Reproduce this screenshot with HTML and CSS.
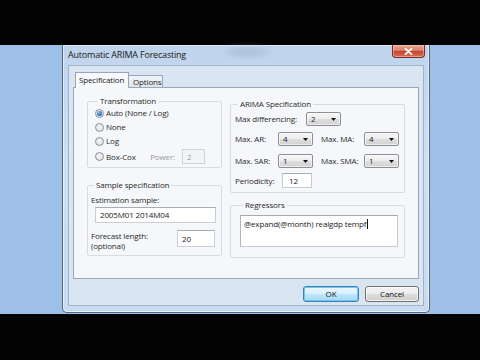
FILE: index.html
```html
<!DOCTYPE html>
<html>
<head>
<meta charset="utf-8">
<title>Automatic ARIMA Forecasting</title>
<link rel="stylesheet" href="styles.css">
</head>
<body>
<div class="screen">
  <div class="bar bar-top"></div>
  <div class="desktop">
    <div class="dialog">
      <div class="titlebar">
        <span class="title">Automatic ARIMA Forecasting</span>
        <span class="glass-blob"></span>
        <span class="close"><svg width="9" height="7" viewBox="0 0 9 7"><path d="M1.5 0.8 L7.5 6.2 M7.5 0.8 L1.5 6.2" stroke="#fff" stroke-width="1.8" stroke-linecap="round"/></svg></span>
      </div>
      <div class="client">
        <div class="tabs">
          <div class="tab active">Specification</div>
          <div class="tab">Options</div>
        </div>
        <div class="panel">
          <div class="col col-left">
            <div class="group g-trans">
              <div class="gtitle">Transformation</div>
              <div class="radios">
                <div class="radio-row"><span class="radio checked"></span><span>Auto (None / Log)</span></div>
                <div class="radio-row"><span class="radio"></span><span>None</span></div>
                <div class="radio-row"><span class="radio"></span><span>Log</span></div>
                <div class="radio-row boxcox"><span class="radio"></span><span>Box-Cox</span><span class="power">Power:</span><span class="field disabled power-box">2</span></div>
              </div>
            </div>
            <div class="group g-sample">
              <div class="gtitle">Sample specification</div>
              <div class="est-lbl">Estimation sample:</div>
              <div class="field est-field">2005M01 2014M04</div>
              <div class="fc-row">
                <div class="fc-lbl"><div>Forecast length:</div><div>(optional)</div></div>
                <div class="field fc-field">20</div>
              </div>
            </div>
          </div>
          <div class="col col-right">
            <div class="group g-arima">
              <div class="gtitle">ARIMA Specification</div>
              <div class="arow r-diff"><span class="lbl w-diff">Max differencing:</span><span class="combo"><span>2</span><svg class="arrow" width="5" height="3" viewBox="0 0 5 3"><path d="M0 0 H5 L2.5 3 Z" fill="#111"/></svg></span></div>
              <div class="arow r-ar"><span class="lbl w-a">Max. AR:</span><span class="combo"><span>4</span><svg class="arrow" width="5" height="3" viewBox="0 0 5 3"><path d="M0 0 H5 L2.5 3 Z" fill="#111"/></svg></span><span class="lbl w-b">Max. MA:</span><span class="combo"><span>4</span><svg class="arrow" width="5" height="3" viewBox="0 0 5 3"><path d="M0 0 H5 L2.5 3 Z" fill="#111"/></svg></span></div>
              <div class="arow r-sar"><span class="lbl w-a">Max. SAR:</span><span class="combo"><span>1</span><svg class="arrow" width="5" height="3" viewBox="0 0 5 3"><path d="M0 0 H5 L2.5 3 Z" fill="#111"/></svg></span><span class="lbl w-b">Max. SMA:</span><span class="combo"><span>1</span><svg class="arrow" width="5" height="3" viewBox="0 0 5 3"><path d="M0 0 H5 L2.5 3 Z" fill="#111"/></svg></span></div>
              <div class="arow r-per"><span class="lbl w-per">Periodicity:</span><span class="field per-field">12</span></div>
            </div>
            <div class="group g-reg">
              <div class="gtitle">Regressors</div>
              <div class="field reg-field">@expand(@month) realgdp tempf<span class="caret"></span></div>
            </div>
          </div>
        </div>
        <div class="buttons">
          <span class="btn btn-default">OK</span>
          <span class="btn">Cancel</span>
        </div>
      </div>
    </div>
  </div>
  <div class="bar bar-bottom"></div>
</div>
</body>
</html>
```

FILE: styles.css
```css
* { box-sizing: border-box; }
html, body { margin: 0; padding: 0; }
body {
  width: 480px; height: 360px; overflow: hidden;
  background: #030303;
  font-family: "Open Sans", "Noto Sans", sans-serif;
  font-size: 8px; line-height: 12px; color: #2a2a2a;
  letter-spacing: -0.15px;
}
.screen { width: 480px; height: 360px; display: flex; flex-direction: column; }
.bar { background: #030303; }
.bar-top { height: 45px; }
.bar-bottom { flex: 1; }
.desktop { height: 269px; background: #9dbfe8; padding-left: 62px; display: flex; }

.dialog {
  width: 368px; height: 268px;
  border: 1px solid #56687d; border-top: none;
  border-radius: 0 0 5px 5px;
  background: linear-gradient(180deg, #bfd4ec 0%, #cfe0f3 45%, #c9dbef 100%);
  box-shadow: inset 0 0 0 1px rgba(255,255,255,0.55);
  padding: 0 5px 6px 5px;
  display: flex; flex-direction: column;
}
.titlebar { height: 20px; display: flex; align-items: flex-start; position: relative; }
.title { font-size: 9px; line-height: 20px; color: #1a1a1a; letter-spacing: -0.2px; }
.glass-blob {
  position: absolute; left: 158px; top: 3px; width: 42px; height: 8px;
  background: #9fb6cf; border-radius: 50%; filter: blur(3px); opacity: .7;
}
.close {
  margin-left: auto; margin-right: -1px;
  width: 33px; height: 13px;
  border: 1px solid #7d2d22; border-top: none;
  border-radius: 0 0 4px 4px;
  background: linear-gradient(180deg, #e8a796 0%, #d9826d 45%, #c3452f 55%, #d5735b 100%);
  box-shadow: inset 0 0 0 1px rgba(255,220,210,0.45);
  display: flex; align-items: center; justify-content: center;
}

.client {
  flex: 1;
  background: #dae5f2;
  border: 1px solid #9fb3ca;
  padding: 6px 4px 3px 4px;
  display: flex; flex-direction: column;
}
.tabs { height: 15px; display: flex; align-items: flex-end; padding-left: 2px; }
.tab {
  height: 12px; line-height: 11px;
  padding: 0 4px;
  border: 1px solid #98a8bb; border-bottom: none;
  background: linear-gradient(180deg, #f2f4f7, #dfe5ec);
  color: #222;
  margin-left: -1px;
}
.tab.active {
  height: 16px; line-height: 14px;
  width: 54px; padding-left: 3px;
  background: #f6f8fa;
  margin-bottom: -1px; margin-left: 0;
  position: relative; z-index: 1;
}
.tab:last-child { width: 35px; }
.panel {
  height: 192px;
  border: 1px solid #98a8bb;
  background: #f5f7fa;
  display: flex; align-items: flex-start;
  padding: 0 13px; gap: 8px;
}
.col { display: flex; flex-direction: column; }
.col-left { width: 135px; padding-top: 13px; gap: 17px; }
.col-right { width: 175px; padding-top: 16px; gap: 12px; }
.group { border: 1px solid #d6dce4; border-radius: 2px; }
.gtitle {
  margin-top: -7px; margin-left: 3px;
  width: fit-content; padding: 0 2px;
  background: #f5f7fa; line-height: 12px; color: #2a2a2a;
}
.g-trans { height: 67px; padding-left: 7px; }
.g-sample { height: 71px; padding: 0 6px 0 3px; }
.g-arima { height: 89px; padding-left: 4px; }
.g-reg { height: 53px; padding-left: 9px; }

.radios { display: flex; flex-direction: column; gap: 2px; }
.radio-row { height: 12px; display: flex; align-items: center; gap: 2px; }
.radio-row.boxcox { height: 15px; }
.radio {
  width: 9px; height: 9px; border-radius: 50%;
  border: 1px solid #8b9097;
  background: radial-gradient(circle at 50% 40%, #f4f5f6 0%, #d9dde2 100%);
  display: inline-flex; align-items: center; justify-content: center;
  flex: none;
}
.radio.checked::after {
  content: ""; width: 5px; height: 5px; border-radius: 50%;
  background: radial-gradient(circle at 40% 35%, #8fc3ef 0%, #2b6fb6 60%, #1c4f8c 100%);
}
.power { margin-left: auto; color: #9a9a9a; margin-right: 5px; }
.power-box { width: 23px; height: 15px; margin-right: 16px; }

.field {
  background: #fff;
  border: 1px solid #c9ced5; border-top-color: #a8adb4;
  padding-left: 4px; line-height: 13px;
  color: #222;
}
.field.disabled { background: #f3f4f6; color: #9a9a9a; border-color: #cfd3d8; }

.est-lbl { margin-top: 3px; }
.est-field { width: 121px; height: 16px; margin-top: 1px; margin-left: 4px; line-height: 14px; padding-left: 4px; }
.fc-row { margin-top: 7px; display: flex; align-items: flex-start; }
.fc-lbl { line-height: 10px; margin-top: 1px; }
.fc-field { width: 38px; height: 17px; margin-left: auto; line-height: 15px; }

.arow { display: flex; align-items: center; height: 14px; }
.r-diff { margin-top: 2px; }
.r-ar { margin-top: 6px; }
.r-sar { margin-top: 8px; }
.r-per { margin-top: 5px; height: 15px; }
.lbl { flex: none; }
.w-diff { width: 71px; }
.w-a { width: 43px; }
.w-b { width: 43px; margin-left: 8px; }
.w-per { width: 47px; }
.combo {
  width: 35px; height: 14px;
  border: 1px solid #8c9096; border-radius: 2px;
  background: linear-gradient(180deg, #f6f6f6 0%, #ececec 50%, #dedede 51%, #d2d2d2 100%);
  box-shadow: inset 0 0 0 1px rgba(255,255,255,0.6);
  display: flex; align-items: center;
  padding: 0 4px 0 4px; line-height: 12px; color: #222;
}
.combo .arrow { margin-left: auto; }
.per-field { width: 30px; height: 15px; line-height: 13px; padding-left: 6px; }

.reg-field { width: 158px; height: 32px; margin-top: 4px; padding: 2px 0 0 3px; line-height: 12px; border-color: #c5cbd2; border-top-color: #a4aab2; border-left-color: #b0b6bd; }
.caret { display: inline-block; width: 1px; height: 10px; background: #111; vertical-align: -2px; margin-left: 1px; }

.buttons { margin-top: 7px; display: flex; justify-content: flex-end; gap: 6px; }
.btn {
  height: 16px; line-height: 14px; text-align: center;
  border: 1px solid #707070; border-radius: 3px;
  background: linear-gradient(180deg, #f2f2f2 0%, #ebebeb 50%, #dddddd 51%, #cfcfcf 100%);
  box-shadow: inset 0 0 0 1px rgba(255,255,255,0.7);
  width: 54px; color: #111;
}
.btn-default {
  width: 56px;
  border-color: #3c7fb1;
  background: linear-gradient(180deg, #eaf6fd 0%, #d9f0fc 50%, #bee6fd 51%, #a7d9f5 100%);
  box-shadow: inset 0 0 0 1px #6fcaf0;
}
```
